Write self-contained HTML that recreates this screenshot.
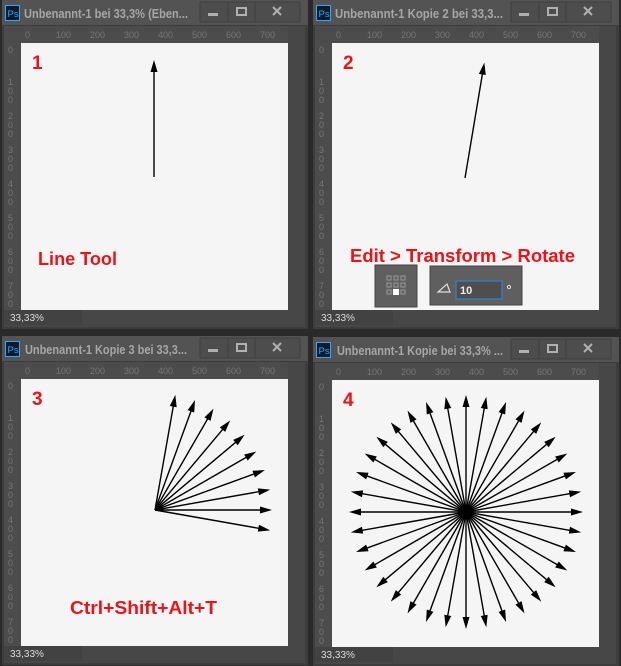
<!DOCTYPE html>
<html><head><meta charset="utf-8"><style>
html,body{margin:0;padding:0;background:#2a2a2a;width:621px;height:666px;overflow:hidden}
svg{display:block}
text{font-family:"Liberation Sans",sans-serif}
</style></head><body>
<svg width="621" height="666" viewBox="0 0 621 666" xmlns="http://www.w3.org/2000/svg">
<defs>
<g id="arr"><line x1="0" y1="0" x2="108" y2="0" stroke="#000" stroke-width="1.4"/><polygon points="117,0 105,-3.5 105,3.5" fill="#000"/></g>
<g id="win">
<rect x="2" y="0" width="306" height="329" fill="#3d3d3d"/>
<rect x="2" y="0" width="306" height="25" fill="#535353"/>
<rect x="5.5" y="5.5" width="14" height="15" fill="#0b1b2b" stroke="#31a8ff" stroke-width="1"/>
<text x="7.5" y="17" font-size="9.5" fill="#31a8ff">Ps</text>
<rect x="200" y="2" width="100" height="20" fill="#4d4d4d" stroke="#3f3f3f"/>
<line x1="228" y1="2" x2="228" y2="22" stroke="#3f3f3f"/>
<line x1="255" y1="2" x2="255" y2="22" stroke="#3f3f3f"/>
<rect x="208" y="13" width="10" height="3" fill="#b0b0b0"/>
<rect x="237" y="8" width="9" height="7" fill="none" stroke="#b0b0b0" stroke-width="2"/>
<path d="M273 7 L281 15 M281 7 L273 15" stroke="#b0b0b0" stroke-width="2"/>
<rect x="4" y="26" width="301" height="301" fill="#474747"/>
<rect x="4" y="26" width="284" height="17" fill="#4c4c4c"/>
<rect x="4" y="26" width="17" height="284" fill="#4c4c4c"/>
<g font-size="9" fill="#767676">
<text x="25" y="38">0</text><text x="56" y="38">100</text><text x="90" y="38">200</text><text x="124" y="38">300</text><text x="158" y="38">400</text><text x="192" y="38">500</text><text x="226" y="38">600</text><text x="260" y="38">700</text>
<text x="8" y="53">0</text>
<text x="8" y="85">1</text><text x="8" y="94">0</text><text x="8" y="103">0</text>
<text x="8" y="119">2</text><text x="8" y="128">0</text><text x="8" y="137">0</text>
<text x="8" y="153">3</text><text x="8" y="162">0</text><text x="8" y="171">0</text>
<text x="8" y="187">4</text><text x="8" y="196">0</text><text x="8" y="205">0</text>
<text x="8" y="221">5</text><text x="8" y="230">0</text><text x="8" y="239">0</text>
<text x="8" y="255">6</text><text x="8" y="264">0</text><text x="8" y="273">0</text>
<text x="8" y="289">7</text><text x="8" y="298">0</text><text x="8" y="307">0</text>
</g>
<rect x="21" y="43" width="267" height="267" fill="#f5f5f5"/>
<rect x="4" y="310" width="78" height="15" fill="#424242"/>
<text x="10" y="321" font-size="10" fill="#dcdcdc">33,33%</text>
</g>
</defs>

<use href="#win" x="0" y="0"/>
<use href="#win" x="311" y="0"/>
<use href="#win" x="0" y="336"/>
<use href="#win" x="311" y="337"/>

<g font-size="13" font-weight="bold" fill="#a6a6a6">
<text x="24" y="18" textLength="164" lengthAdjust="spacingAndGlyphs">Unbenannt-1 bei 33,3% (Eben...</text>
<text x="335" y="18" textLength="168" lengthAdjust="spacingAndGlyphs">Unbenannt-1 Kopie 2 bei 33,3...</text>
<text x="25" y="354" textLength="162" lengthAdjust="spacingAndGlyphs">Unbenannt-1 Kopie 3 bei 33,3...</text>
<text x="337" y="355" textLength="166" lengthAdjust="spacingAndGlyphs">Unbenannt-1 Kopie bei 33,3% ...</text>
</g>

<g font-weight="bold" fill="#e8141a">
<text x="32" y="69" font-size="19">1</text>
<text x="343" y="69" font-size="19">2</text>
<text x="32" y="405" font-size="19">3</text>
<text x="343" y="406" font-size="19">4</text>
<text x="38" y="265" font-size="18" textLength="79" lengthAdjust="spacingAndGlyphs">Line Tool</text>
<text x="350" y="262" font-size="18.5" textLength="225" lengthAdjust="spacingAndGlyphs">Edit &gt; Transform &gt; Rotate</text>
<text x="70" y="614" font-size="18.5" textLength="147" lengthAdjust="spacingAndGlyphs">Ctrl+Shift+Alt+T</text>
</g>

<!-- rotate widgets -->
<rect x="375" y="265" width="42" height="42" fill="#5f5f5f" stroke="#454545"/>
<g fill="none" stroke="#9a9a9a" stroke-width="1">
<rect x="387" y="276" width="4" height="4"/><rect x="394" y="276" width="4" height="4"/><rect x="401" y="276" width="4" height="4"/>
<rect x="387" y="283" width="4" height="4"/><rect x="394" y="283" width="4" height="4"/><rect x="401" y="283" width="4" height="4"/>
<rect x="387" y="290" width="4" height="4"/><rect x="401" y="290" width="4" height="4"/>
</g>
<rect x="393" y="289" width="6" height="6" fill="#fff"/>
<rect x="430" y="266" width="92" height="39" fill="#5f5f5f" stroke="#454545"/>
<path d="M438 292 L450 292 L447 284 Z" fill="none" stroke="#ddd" stroke-width="1.2"/>
<rect x="456" y="281" width="46" height="18" fill="#4e4e4e" stroke="#3a7fd0" stroke-width="1.2"/>
<text x="460" y="294" font-size="11" font-weight="bold" fill="#ececec">10</text>
<circle cx="509" cy="287" r="1.6" fill="none" stroke="#ddd"/>

<!-- drawings -->
<use href="#arr" transform="translate(154,177) rotate(-90)"/>
<use href="#arr" transform="translate(465,178) rotate(-80.5)"/>
<g transform="translate(155,510)">
<use href="#arr" transform="rotate(10)"/><use href="#arr" transform="rotate(0)"/><use href="#arr" transform="rotate(-10)"/><use href="#arr" transform="rotate(-20)"/><use href="#arr" transform="rotate(-30)"/><use href="#arr" transform="rotate(-40)"/><use href="#arr" transform="rotate(-50)"/><use href="#arr" transform="rotate(-60)"/><use href="#arr" transform="rotate(-70)"/><use href="#arr" transform="rotate(-80)"/>
</g>
<g transform="translate(466,512)">
<use href="#arr" transform="rotate(0)"/><use href="#arr" transform="rotate(10)"/><use href="#arr" transform="rotate(20)"/><use href="#arr" transform="rotate(30)"/><use href="#arr" transform="rotate(40)"/><use href="#arr" transform="rotate(50)"/><use href="#arr" transform="rotate(60)"/><use href="#arr" transform="rotate(70)"/><use href="#arr" transform="rotate(80)"/><use href="#arr" transform="rotate(90)"/><use href="#arr" transform="rotate(100)"/><use href="#arr" transform="rotate(110)"/><use href="#arr" transform="rotate(120)"/><use href="#arr" transform="rotate(130)"/><use href="#arr" transform="rotate(140)"/><use href="#arr" transform="rotate(150)"/><use href="#arr" transform="rotate(160)"/><use href="#arr" transform="rotate(170)"/><use href="#arr" transform="rotate(180)"/><use href="#arr" transform="rotate(190)"/><use href="#arr" transform="rotate(200)"/><use href="#arr" transform="rotate(210)"/><use href="#arr" transform="rotate(220)"/><use href="#arr" transform="rotate(230)"/><use href="#arr" transform="rotate(240)"/><use href="#arr" transform="rotate(250)"/><use href="#arr" transform="rotate(260)"/><use href="#arr" transform="rotate(270)"/><use href="#arr" transform="rotate(280)"/><use href="#arr" transform="rotate(290)"/><use href="#arr" transform="rotate(300)"/><use href="#arr" transform="rotate(310)"/><use href="#arr" transform="rotate(320)"/><use href="#arr" transform="rotate(330)"/><use href="#arr" transform="rotate(340)"/><use href="#arr" transform="rotate(350)"/>
</g>
</svg>
</body></html>
